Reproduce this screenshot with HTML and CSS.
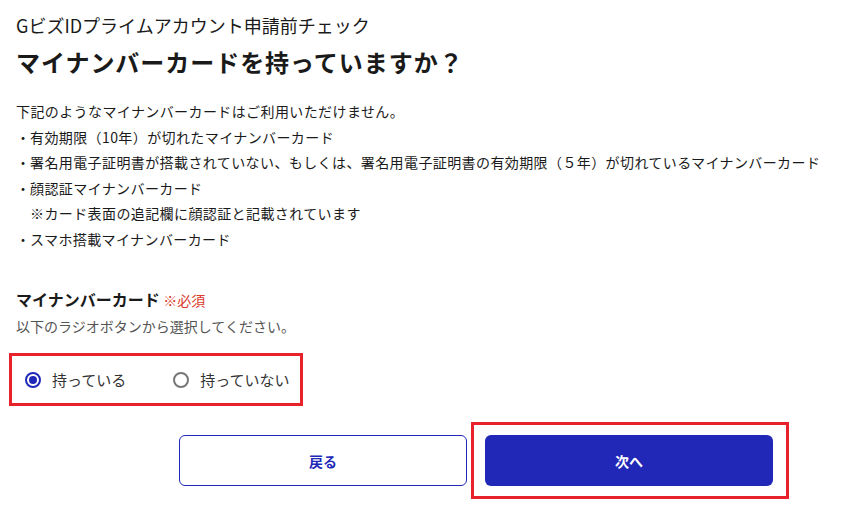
FILE: index.html
```html
<!DOCTYPE html>
<html lang="ja">
<head>
  <meta charset="UTF-8">
  <title>GビズIDプライムアカウント申請前チェック</title>
  <link rel="stylesheet" href="styles.css">
</head>
<body>
  <main class="page">
    <p class="sub-title">GビズIDプライムアカウント申請前チェック</p>
    <h1 class="title">マイナンバーカードを持っていますか？</h1>

    <div class="notice">
      <p>下記のようなマイナンバーカードはご利用いただけません。</p>
      <ul class="notice-list">
        <li>有効期限（10年）が切れたマイナンバーカード</li>
        <li>署名用電子証明書が搭載されていない、もしくは、署名用電子証明書の有効期限（５年）が切れているマイナンバーカード</li>
        <li>顔認証マイナンバーカード<br>※カード表面の追記欄に顔認証と記載されています</li>
        <li>スマホ搭載マイナンバーカード</li>
      </ul>
    </div>

    <fieldset class="field">
      <legend class="field-label">マイナンバーカード <span class="required">※必須</span></legend>
      <p class="field-help">以下のラジオボタンから選択してください。</p>
      <div class="radio-group highlight">
        <label class="radio"><input type="radio" name="card" checked><span class="radio-mark"></span>持っている</label>
        <label class="radio"><input type="radio" name="card"><span class="radio-mark"></span>持っていない</label>
      </div>
    </fieldset>

    <div class="actions">
      <button class="btn btn-outline">戻る</button>
      <div class="highlight btn-wrap">
        <button class="btn btn-primary">次へ</button>
      </div>
    </div>
  </main>
</body>
</html>
```

FILE: styles.css
```css
body {
  margin: 0;
  font-family: "Noto Sans CJK JP", "Noto Sans", sans-serif;
  color: #1a1a1a;
  background: #fff;
}
.page {
  padding: 12px 16px 0;
}
p {
  margin: 0;
}
.sub-title {
  font-size: 18px;
  line-height: 26px;
}
.title {
  margin: 6px 0 0;
  font-size: 24px;
  line-height: 36px;
  font-weight: 700;
  letter-spacing: 0.04em;
}
.notice {
  margin-top: 19px;
  font-size: 14px;
  line-height: 25.5px;
  letter-spacing: 0.4px;
}
.notice-list {
  margin: 0;
  padding: 0;
  list-style: none;
}
.notice-list li {
  padding-left: 14px;
  position: relative;
}
.notice-list li::before {
  content: "・";
  position: absolute;
  left: 0;
}
.field {
  margin: 34px 0 0;
  padding: 0;
  border: none;
}
.field-label {
  padding: 0;
  font-size: 16px;
  line-height: 26px;
  font-weight: 700;
}
.required {
  font-size: 14px;
  font-weight: 400;
  color: #d93a2b;
}
.field-help {
  margin-top: 2px;
  font-size: 14px;
  line-height: 22px;
  color: #555;
}
.highlight {
  border: 3px solid #e8212b;
}
.radio-group {
  display: flex;
  gap: 47px;
  width: max-content;
  margin: 16px 0 0 -7px;
  padding: 11px 10px 10px 13px;
}
.radio {
  display: flex;
  align-items: center;
  gap: 11px;
  font-size: 15px;
  line-height: 26px;
  color: #333;
  cursor: pointer;
}
.radio input {
  display: none;
}
.radio-mark {
  width: 12px;
  height: 12px;
  border: 2px solid #777;
  border-radius: 50%;
  box-sizing: content-box;
  position: relative;
}
.radio input:checked + .radio-mark {
  border-color: #2128b8;
}
.radio input:checked + .radio-mark::after {
  content: "";
  position: absolute;
  left: 2px;
  top: 2px;
  width: 8px;
  height: 8px;
  border-radius: 50%;
  background: #2128b8;
}
.actions {
  display: flex;
  align-items: center;
  margin-top: 16px;
  padding-left: 163px;
}
.btn {
  width: 288px;
  height: 51px;
  border-radius: 6px;
  font-family: inherit;
  font-size: 14px;
  font-weight: 700;
  cursor: pointer;
}
.btn-outline {
  border: 1px solid #2128b8;
  background: #fff;
  color: #2128b8;
}
.btn-wrap {
  margin-left: 4px;
  padding: 10px 13px 10px 11px;
}
.btn-primary {
  display: block;
  border: none;
  background: #2128b8;
  color: #fff;
}
```
